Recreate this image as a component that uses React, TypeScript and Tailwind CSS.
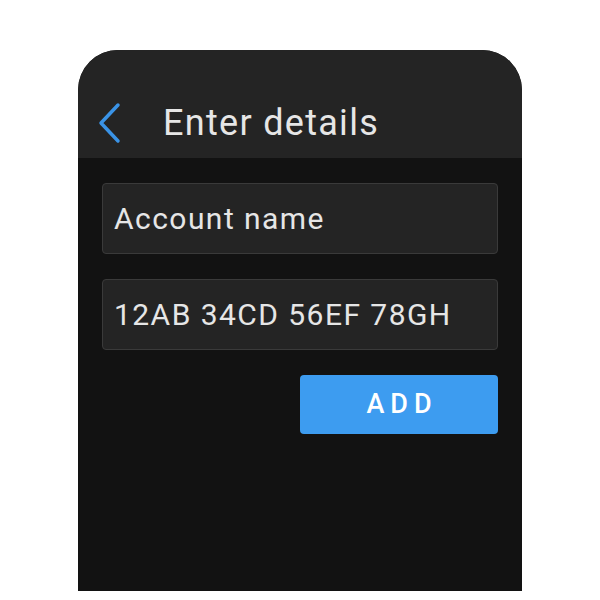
export default function App() {
  return (
    <div className="w-[600px] h-[600px] bg-white flex justify-center pt-[50px] font-['Roboto',sans-serif]">
      <div className="w-[444px] h-[541px] bg-[#121212] rounded-t-[40px] overflow-hidden flex flex-col">
        <div className="h-[108px] bg-[#242424] flex items-center pt-[38px] pl-[18px]">
          <svg width="26" height="42" viewBox="0 0 26 42" className="shrink-0">
            <path d="M22 3 L5 21 L22 39" fill="none" stroke="#3a93e6" strokeWidth="3.5" strokeLinecap="round" strokeLinejoin="round" />
          </svg>
          <h1 className="ml-[41px] text-[36px] leading-none text-[#e6e6e6] tracking-[1.3px]">Enter details</h1>
        </div>
        <div className="flex flex-col px-[24px] pt-[25px]">
          <div className="h-[71px] bg-[#242424] border border-[#3a3a3a] rounded-[4px] flex items-center px-[11px]">
            <span className="text-[30px] text-[#e6e6e6] tracking-[1.45px]">Account name</span>
          </div>
          <div className="mt-[25px] h-[71px] bg-[#242424] border border-[#3a3a3a] rounded-[4px] flex items-center px-[11px]">
            <span className="text-[30px] text-[#e6e6e6] tracking-[1.45px]">12AB 34CD 56EF 78GH</span>
          </div>
          <div className="flex justify-end mt-[25px]">
            <button className="w-[198px] h-[59px] bg-[#3d9cf0] rounded-[4px] text-white text-[27px] font-medium tracking-[6px] pl-[6px]">
              ADD
            </button>
          </div>
        </div>
      </div>
    </div>
  );
}
